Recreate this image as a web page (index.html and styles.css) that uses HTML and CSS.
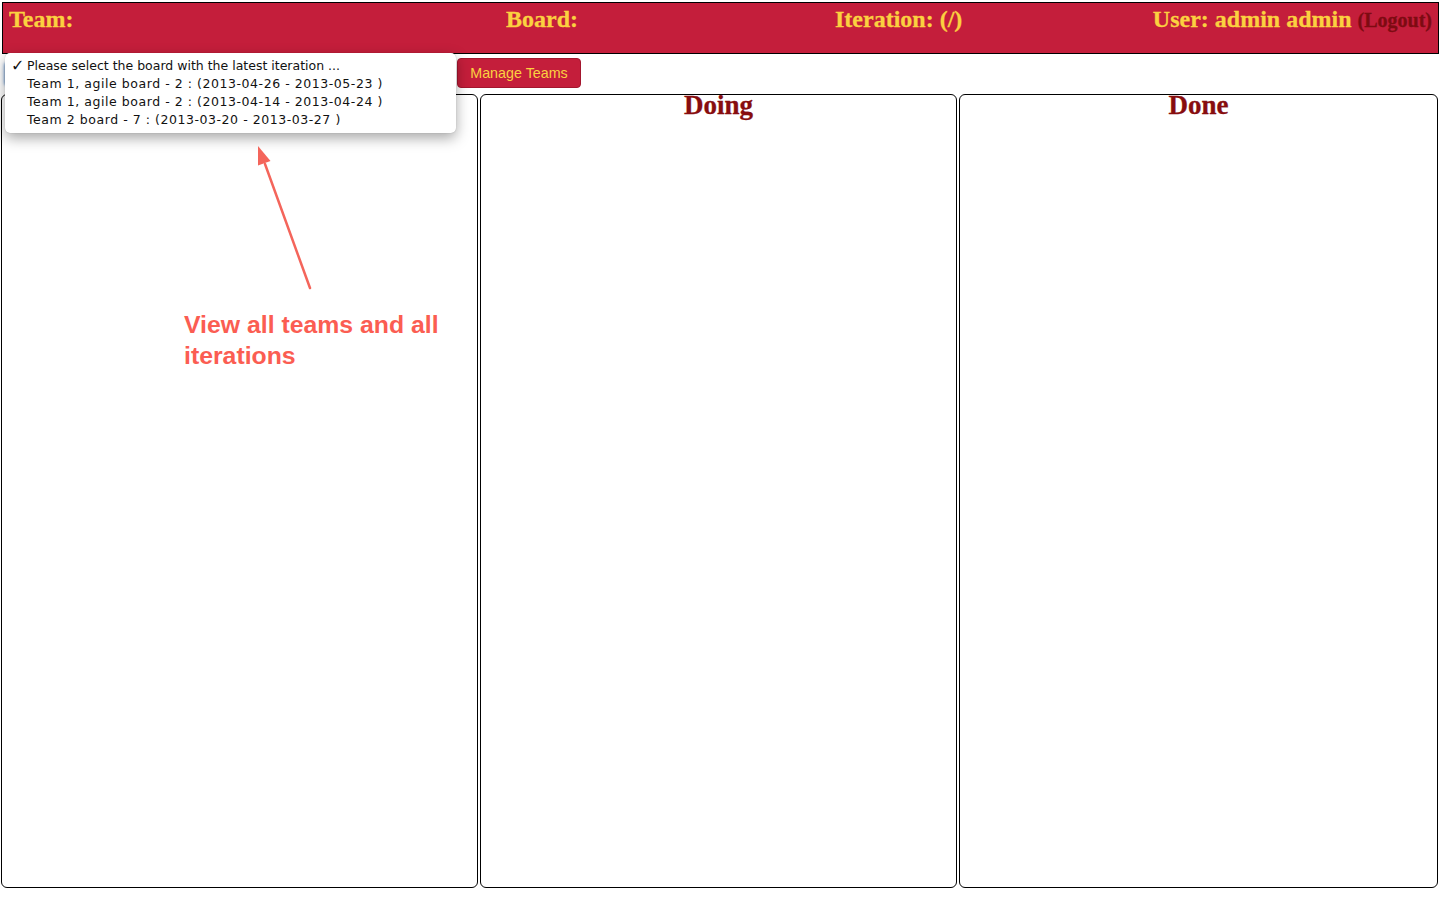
FILE: index.html
```html
<!DOCTYPE html>
<html>
<head>
<meta charset="utf-8">
<title>Agile Board</title>
<link rel="stylesheet" href="styles.css">
</head>
<body>
<header class="topbar">
  <div class="cell team">Team:</div>
  <div class="cell board">Board:</div>
  <div class="cell iteration">Iteration: (/)</div>
  <div class="cell user">User: admin admin <a class="logout" href="#">(Logout)</a></div>
</header>
<div class="toolbar">
  <div class="select-box"></div>
  <button class="btn">Manage Teams</button>
</div>
<main class="columns">
  <section class="col"><h2 class="col-title">To Do</h2></section>
  <section class="col"><h2 class="col-title">Doing</h2></section>
  <section class="col"><h2 class="col-title">Done</h2></section>
</main>

<ul class="dropdown">
  <li class="opt checked"><span class="check">✓</span><span class="label">Please select the board with the latest iteration ...</span></li>
  <li class="opt"><span class="check"></span><span class="label wide">Team 1, agile board - 2 : (2013-04-26 - 2013-05-23 )</span></li>
  <li class="opt"><span class="check"></span><span class="label wide">Team 1, agile board - 2 : (2013-04-14 - 2013-04-24 )</span></li>
  <li class="opt"><span class="check"></span><span class="label wide">Team 2 board - 7 : (2013-03-20 - 2013-03-27 )</span></li>
</ul>

<div class="annotation">
  <svg class="arrow" width="80" height="160" viewBox="0 0 80 160">
    <line x1="56" y1="148" x2="11" y2="24" stroke="#f4655b" stroke-width="2.5" stroke-linecap="round"/>
    <polygon points="4,6 16.5,21 4,25.5" fill="#f4655b"/>
  </svg>
  <p class="note">View all teams and all iterations</p>
</div>
</body>
</html>
```
FILE: styles.css
```css
html, body {
  margin: 0;
  padding: 0;
  background: #ffffff;
}
body {
  font-family: "Liberation Serif", "Times New Roman", serif;
  width: 1440px;
  height: 900px;
  overflow: hidden;
  position: relative;
}
.topbar {
  margin: 2px 1px 0 2px;
  border: 1px solid #000;
  background: #c41e3b;
  display: grid;
  grid-template-columns: 497px 329px 1fr auto;
  align-items: start;
  padding: 3px 6px 0 6px;
  box-sizing: border-box;
  height: 52px;
}
.cell {
  font-weight: bold;
  font-size: 24px;
  color: #fbd140;
  line-height: 27px;
  -webkit-text-stroke: 0.3px #fbd140;
}
.logout {
  color: #7d0b12;
  font-size: 20px;
  text-decoration: none;
  -webkit-text-stroke: 0.3px #7d0b12;
}
.toolbar {
  display: flex;
  align-items: center;
  height: 40px;
  padding-left: 4px;
  box-sizing: border-box;
}
.select-box {
  width: 444px;
  height: 22px;
  margin-right: 7px;
  border-radius: 4px;
  border: 1px solid #a9c2e0;
  box-shadow: 0 0 3px #7aa7e0;
  background: #fff;
}
.btn {
  height: 30px;
  width: 124px;
  padding: 0;
  background: #c41e3b;
  color: #fbd140;
  font-family: "Liberation Sans", Arial, sans-serif;
  font-size: 14.3px;
  border: 1px solid #a3162e;
  border-radius: 4px;
  margin-top: -2px;
}
.columns {
  display: grid;
  grid-template-columns: 477px 477px 479px;
  column-gap: 2px;
  padding: 0 2px 0 1px;
  height: 794px;
}
.col {
  border: 1px solid #000;
  border-radius: 6px;
  box-sizing: border-box;
  height: 794px;
}
.col-title {
  margin: 0;
  text-align: center;
  font-size: 27px;
  font-weight: bold;
  color: #870d0f;
  line-height: 21px;
  -webkit-text-stroke: 0.3px #870d0f;
}
.dropdown {
  position: absolute;
  left: 5px;
  top: 53px;
  width: 451px;
  height: 80px;
  margin: 0;
  padding: 4px 0 0 0;
  box-sizing: border-box;
  list-style: none;
  background: #fff;
  border-radius: 5px;
  box-shadow: 0 5px 14px rgba(0,0,0,0.35), 0 0 1px rgba(0,0,0,0.3);
  font-family: "DejaVu Sans", "Lucida Grande", sans-serif;
  font-size: 12.5px;
  color: #111;
}
.opt {
  height: 18px;
  line-height: 18px;
  display: flex;
  white-space: nowrap;
}
.check {
  width: 22px;
  flex: none;
  box-sizing: border-box;
  padding-left: 6px;
  font-size: 16px;
  font-weight: bold;
  line-height: 17px;
}
.wide {
  letter-spacing: 0.55px;
}
.annotation {
  position: absolute;
  left: 184px;
  top: 140px;
}
.arrow {
  position: absolute;
  left: 70px;
  top: 0;
}
.note {
  margin: 0;
  padding-top: 169px;
  width: 270px;
  font-family: "Liberation Sans", Arial, sans-serif;
  font-weight: bold;
  font-size: 24.8px;
  line-height: 31px;
  color: #fb5d52;
}
```
